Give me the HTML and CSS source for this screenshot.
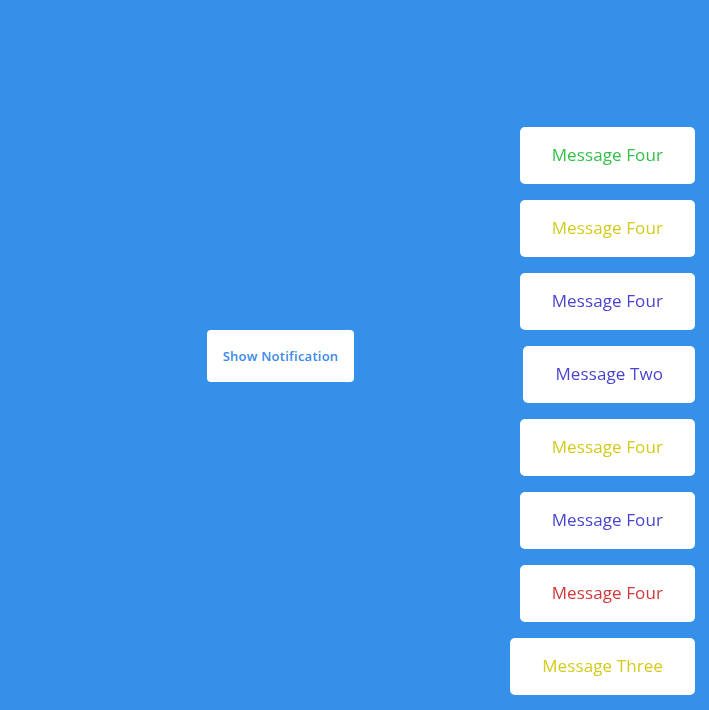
FILE: index.html
```html
<!DOCTYPE html>
<html lang="en">
<head>
<meta charset="utf-8">
<title>Notifications</title>
<link rel="stylesheet" href="styles.css">
</head>
<body>
<main class="stage">
  <button class="show-btn" type="button">Show Notification</button>
</main>
<div class="toasts">
  <div class="toast success">Message Four</div>
  <div class="toast warning">Message Four</div>
  <div class="toast info">Message Four</div>
  <div class="toast info">Message Two</div>
  <div class="toast warning">Message Four</div>
  <div class="toast info">Message Four</div>
  <div class="toast error">Message Four</div>
  <div class="toast warning">Message Three</div>
</div>
</body>
</html>
```
FILE: styles.css
```css
* { box-sizing: border-box; }
html, body { margin: 0; height: 100%; }
body {
  background: #3490e8;
  font-family: "Open Sans", "Liberation Sans", sans-serif;
  overflow: hidden;
}
.stage {
  height: 100vh;
  display: flex;
  align-items: center;
  justify-content: center;
  padding-right: 148px;
  padding-top: 2px;
}
.show-btn {
  background: #fff;
  color: #3a8ae8;
  border: none;
  border-radius: 4px;
  font-family: inherit;
  font-size: 13px;
  font-weight: 600;
  letter-spacing: 0.25px;
  line-height: 20px;
  padding: 16px 0;
  width: 147px;
  height: 52px;
  cursor: pointer;
}
.toasts {
  position: fixed;
  right: 14px;
  bottom: 15px;
  display: flex;
  flex-direction: column;
  align-items: flex-end;
  gap: 16px;
}
.toast {
  background: #fff;
  border-radius: 5px;
  height: 57px;
  padding: 0 32px 1px;
  display: flex;
  align-items: center;
  font-size: 17px;
  letter-spacing: 0.1px;
  line-height: 24px;
}
.success { color: #35c04a; }
.warning { color: #d3cb1d; }
.info { color: #4a45cf; }
.error { color: #d13a3a; }
```
